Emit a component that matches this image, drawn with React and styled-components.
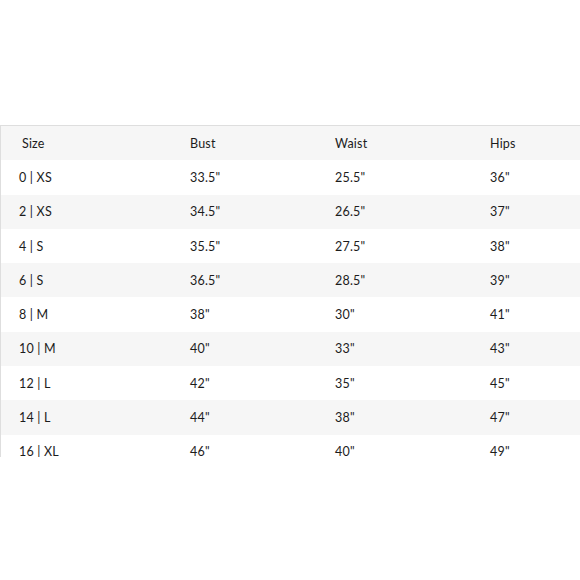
import React from 'react';
import styled, { createGlobalStyle } from 'styled-components';

const GlobalStyle = createGlobalStyle`
  html, body {
    margin: 0;
    padding: 0;
    background: #fff;
  }
  body {
    font-family: Lato, "Noto Sans", sans-serif;
    color: #1c1c1c;
  }
`;

const sizes = [
  ['0 | XS', '33.5"', '25.5"', '36"'],
  ['2 | XS', '34.5"', '26.5"', '37"'],
  ['4 | S', '35.5"', '27.5"', '38"'],
  ['6 | S', '36.5"', '28.5"', '39"'],
  ['8 | M', '38"', '30"', '41"'],
  ['10 | M', '40"', '33"', '43"'],
  ['12 | L', '42"', '35"', '45"'],
  ['14 | L', '44"', '38"', '47"'],
  ['16 | XL', '46"', '40"', '49"'],
  ['18 | XL', '48"', '42"', '51"'],
];

const Page = styled.div`
  width: 580px;
  height: 580px;
  padding-top: 125px;
  box-sizing: border-box;
`;

const Chart = styled.div`
  height: 331px;
  overflow: hidden;
  border-top: 1px solid #dedede;
  border-left: 1px solid #dedede;
`;

const Row = styled.div`
  display: grid;
  grid-template-columns: 189px 145px 155px 1fr;
  height: 34.3px;
  align-items: center;
  background: ${(p) => (p.$shaded ? '#f6f6f6' : '#fff')};
  font-size: 12.5px;
  letter-spacing: 0.2px;
`;

const Cell = styled.div`
  padding-left: ${(p) => (p.$first ? (p.$head ? '21px' : '18px') : '0')};
`;

const App = () => {
  return (
    <Page>
      <GlobalStyle />
      <Chart>
        <Row $shaded>
          <Cell $first $head>Size</Cell>
          <Cell>Bust</Cell>
          <Cell>Waist</Cell>
          <Cell>Hips</Cell>
        </Row>
        {sizes.map((row, i) => (
          <Row key={row[0]} $shaded={i % 2 === 1}>
            {row.map((val, j) => (
              <Cell key={j} $first={j === 0}>
                {val}
              </Cell>
            ))}
          </Row>
        ))}
      </Chart>
    </Page>
  );
};

export default App;
